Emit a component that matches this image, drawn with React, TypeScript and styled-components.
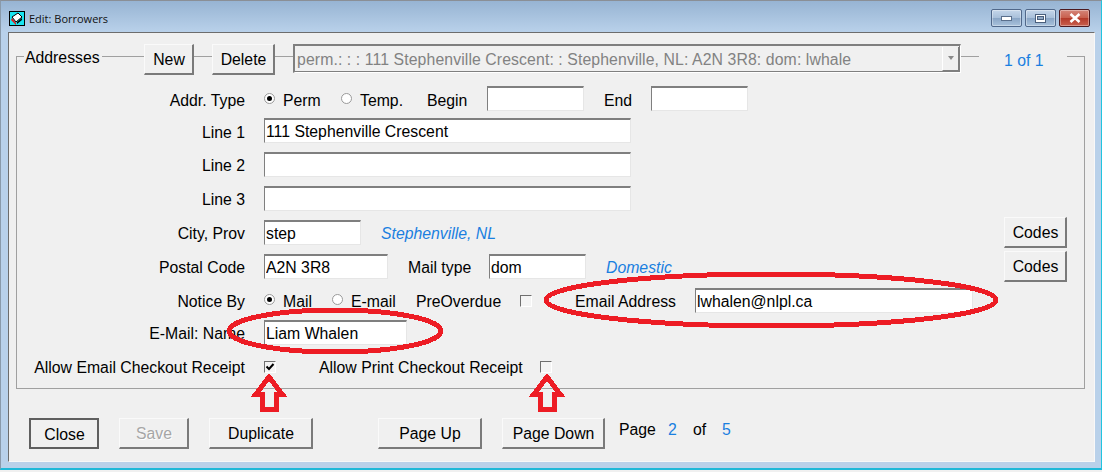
import styled, { createGlobalStyle } from 'styled-components';

const GlobalStyle = createGlobalStyle`
  html, body {
    margin: 0;
    padding: 0;
    background: #f0f0f0;
    overflow: hidden;
  }
`;

const Page = styled.div`
  position: relative;
  width: 1102px;
  height: 472px;
  overflow: hidden;
  font-family: "Liberation Sans", Arial, sans-serif;
  font-size: 15.8px;
  color: #000;
`;

const Frame = styled.div`
  box-sizing: border-box;
  width: 1102px;
  height: 470px;
  display: flex;
  flex-direction: column;
  padding: 1px 6px 6px 7px;
  background: #b9d1ea;
  border-top: 1px solid #8a8f96;
  border-left: 1px solid #8a9aaa;
  border-right: 1px solid #22c4e0;
  border-bottom: 2px solid #1fb8d8;
`;

const TitleBar = styled.div`
  height: 31px;
  margin: -1px -6px 0 -7px;
  padding: 4px 11px 0 8px;
  box-sizing: border-box;
  display: flex;
  align-items: center;
  background: linear-gradient(#97b4d3, #b9d1ea);
  flex-shrink: 0;
`;

const TitleText = styled.span`
  margin-left: 4px;
  font-family: "Open Sans", "Noto Sans", sans-serif;
  font-size: 11px;
  color: #111;
`;

const WindowButtons = styled.div`
  margin-left: auto;
  margin-top: -1px;
  display: flex;
  gap: 3px;
`;

const WindowButton = styled.div<{ $close?: boolean }>`
  box-sizing: border-box;
  width: 31px;
  height: 18px;
  display: flex;
  align-items: center;
  justify-content: center;
  border: 1px solid ${({ $close }) => ($close ? '#4d1a20' : '#50688a')};
  border-radius: 2px;
  background: ${({ $close }) => ($close
    ? 'linear-gradient(#d4867a 0%, #c9604e 48%, #b43a2a 52%, #c9604e 100%)'
    : 'linear-gradient(#c5d6ea 0%, #a9c0da 48%, #8aa6c6 52%, #a9c2dc 100%)')};
  box-shadow: inset 0 0 0 1px rgba(255, 255, 255, 0.35);
`;

const Client = styled.div`
  flex: 1;
  box-sizing: border-box;
  background: #f0f0f0;
  border-top: 1px solid #6d6d6d;
  border-left: 1px solid #6d6d6d;
  border-right: 1px solid #f8f8f8;
  border-bottom: 1px solid #f8f8f8;
  padding: 23px 8px 0 7px;
`;

const Group = styled.div`
  box-sizing: border-box;
  width: 1069px;
  height: 333px;
  display: flex;
  flex-direction: column;
  border: 1px solid #a0a0a0;
  border-top: none;
`;

const GroupHead = styled.div`
  height: 30px;
  margin-top: -12px;
  display: flex;
  align-items: flex-start;
  flex-shrink: 0;
`;

const Rule = styled.div<{ $w?: number }>`
  height: 1px;
  margin-top: 12px;
  background: #a0a0a0;
  width: ${({ $w }) => ($w ? `${$w}px` : 'auto')};
  flex-shrink: 0;
`;

const Legend = styled.span`
  width: 78px;
  padding-left: 1px;
  box-sizing: border-box;
  line-height: 28px;
`;

const Button = styled.button<{ $w: number; $h?: number; $default?: boolean }>`
  box-sizing: border-box;
  width: ${({ $w }) => $w}px;
  height: ${({ $h }) => $h ?? 31}px;
  flex-shrink: 0;
  margin: 0;
  padding: 2px 0 0 1px;
  background: #f0f0f0;
  font: inherit;
  color: #000;
  border-style: solid;
  border-width: ${({ $default }) => ($default ? '2px' : '1px 2px 2px 1px')};
  border-color: ${({ $default }) => ($default
    ? '#5f5f5f'
    : '#fafafa #7a7a7a #7a7a7a #fafafa')};
  &:disabled {
    color: #a6a6a6;
    text-shadow: 1px 1px 0 #fff;
  }
`;

const Combo = styled.div`
  box-sizing: border-box;
  width: 668px;
  height: 29px;
  flex-shrink: 0;
  display: flex;
  align-items: center;
  background: #f0f0f0;
  border-style: solid;
  border-width: 2px 1px 1px 2px;
  border-color: #7f7f7f #fff #fff #7f7f7f;
  box-shadow: inset -1px -1px 0 #7f7f7f;
`;

const ComboText = styled.span`
  flex: 1;
  padding: 2px 0 0 2px;
  overflow: hidden;
  white-space: nowrap;
  letter-spacing: 0.1px;
  color: #828282;
`;

const ComboArrow = styled.div`
  box-sizing: border-box;
  width: 17px;
  height: 24px;
  margin-right: 1px;
  margin-top: -1px;
  display: flex;
  align-items: center;
  justify-content: center;
  border-left: 1px solid #fff;
  border-right: 1px solid #7f7f7f;
  border-bottom: 1px solid #7f7f7f;
  &::after {
    content: '';
    border-left: 3.5px solid transparent;
    border-right: 3.5px solid transparent;
    border-top: 4px solid #8a8a8a;
  }
`;

const Counter = styled.span`
  width: 88px;
  padding-left: 25px;
  box-sizing: border-box;
  color: #1a7fe0;
  line-height: 33px;
`;

const Rows = styled.div`
  margin-top: 10px;
  display: flex;
  flex-direction: column;
`;

// the 2px top padding sits the text a pixel lower, fields and buttons pull back up
const Row = styled.div<{ $h: number }>`
  box-sizing: border-box;
  height: ${({ $h }) => $h}px;
  padding-top: 2px;
  display: flex;
  align-items: center;
  white-space: nowrap;
`;

const Label = styled.span`
  width: 228px;
  margin-right: 19px;
  text-align: right;
  flex-shrink: 0;
`;

const Cell = styled.div<{ $w: number }>`
  width: ${({ $w }) => $w}px;
  flex-shrink: 0;
  display: flex;
  align-items: center;
`;

const Field = styled.input<{ $w: number }>`
  box-sizing: border-box;
  width: ${({ $w }) => $w}px;
  height: 25px;
  flex-shrink: 0;
  margin: -4px 0 0 0;
  padding: 2px 1px 0;
  background: #fff;
  font: inherit;
  color: #000;
  outline: none;
  border-style: solid;
  border-width: 2px 1px 1px 1px;
  border-color: #7f7f7f #e6e6e6 #e6e6e6 #7f7f7f;
`;

const Hint = styled.span`
  color: #1a7fe0;
  font-style: italic;
`;

const Radio = styled.span<{ $on?: boolean }>`
  box-sizing: border-box;
  width: 11px;
  height: 11px;
  margin: -5px 8px 0 0;
  flex-shrink: 0;
  border-radius: 50%;
  background: #fff;
  border: 1px solid #9a9a9a;
  display: flex;
  align-items: center;
  justify-content: center;
  &::after {
    content: '';
    width: 5px;
    height: 5px;
    border-radius: 50%;
    background: ${({ $on }) => ($on ? '#000' : 'transparent')};
  }
`;

const Check = styled.span`
  box-sizing: border-box;
  width: 12px;
  height: 12px;
  margin-top: -3px;
  flex-shrink: 0;
  display: flex;
  background: #f4f4f4;
  border-style: solid;
  border-width: 1px;
  border-color: #6f6f6f #fff #fff #6f6f6f;
`;

const CodesButton = styled(Button)`
  margin: -4px 17px 0 auto;
`;

const Footer = styled.div`
  margin-top: 29px;
  margin-left: 13px;
  display: flex;
  align-items: flex-start;
`;

const Gap = styled.div<{ $w: number }>`
  width: ${({ $w }) => $w}px;
  flex-shrink: 0;
`;

const Pager = styled.div`
  margin-left: 14px;
  display: flex;
  line-height: 23px;
`;

const PagerNum = styled.span<{ $w: number }>`
  width: ${({ $w }) => $w}px;
  color: #1a7fe0;
`;

const PagerWord = styled.span<{ $w: number }>`
  width: ${({ $w }) => $w}px;
`;

const Annotations = styled.svg`
  position: absolute;
  left: 0;
  top: 0;
  pointer-events: none;
`;

function AppIcon() {
  return (
    <svg width="16" height="15" viewBox="0 0 16 15">
      <rect x="0.5" y="0.5" width="15" height="14" fill="#18e4f0" stroke="#000" />
      <path d="M3 6 L9 2 L13 6 L7 11 Z" fill="#fff" stroke="#000" />
      <path d="M3 7 L7 12 L7 14 L2 9 Z" fill="#e01818" />
      <path d="M8 11 L13 7 L13 9 L8 13 Z" fill="#000" />
    </svg>
  );
}

function CheckMark() {
  return (
    <svg width="10" height="10" viewBox="0 0 10 10">
      <path d="M1.5 4.5 L4 7 L8.5 2" fill="none" stroke="#000" strokeWidth="2" />
    </svg>
  );
}

export default function App() {
  const arrow = (x: number) => `M${x} 377 L${x + 13} 394 H${x + 7} V409 H${x - 7} V394 H${x - 13} Z`;

  return (
    <Page>
      <GlobalStyle />
      <Frame>
        <TitleBar>
          <AppIcon />
          <TitleText>Edit: Borrowers</TitleText>
          <WindowButtons>
            <WindowButton>
              <svg width="12" height="6" viewBox="0 0 12 6">
                <rect x="0.5" y="1.5" width="10" height="4" fill="#fff" stroke="#5a6f8c" />
              </svg>
            </WindowButton>
            <WindowButton>
              <svg width="11" height="9" viewBox="0 0 11 9">
                <rect x="0.5" y="0.5" width="10" height="8" fill="#fff" stroke="#4a5f7c" />
                <rect x="2.5" y="2.5" width="6" height="3" fill="#90a8c4" stroke="#4a5f7c" />
              </svg>
            </WindowButton>
            <WindowButton $close>
              <svg width="12" height="10" viewBox="0 0 12 10">
                <path d="M1.5 1 L10.5 9 M10.5 1 L1.5 9" stroke="#fff" strokeWidth="2.6" />
              </svg>
            </WindowButton>
          </WindowButtons>
        </TitleBar>
        <Client>
          <Group>
            <GroupHead>
              <Rule $w={7} />
              <Legend>Addresses</Legend>
              <Rule $w={42} />
              <Button $w={50}>New</Button>
              <Rule $w={18} />
              <Button $w={63}>Delete</Button>
              <Rule $w={18} />
              <Combo>
                <ComboText>perm.: : : 111 Stephenville Crescent: : Stephenville, NL: A2N 3R8: dom: lwhale</ComboText>
                <ComboArrow />
              </Combo>
              <Rule $w={18} />
              <Counter>1 of 1</Counter>
              <Rule $w={17} />
            </GroupHead>
            <Rows>
              <Row $h={31}>
                <Label>Addr. Type</Label>
                <Cell $w={77}><Radio $on />Perm</Cell>
                <Cell $w={86}><Radio />Temp.</Cell>
                <Cell $w={60}>Begin</Cell>
                <Cell $w={117}><Field $w={97} readOnly value="" /></Cell>
                <Cell $w={47}>End</Cell>
                <Field $w={97} readOnly value="" />
              </Row>
              <Row $h={33}>
                <Label>Line 1</Label>
                <Field $w={367} readOnly value="111 Stephenville Crescent" />
              </Row>
              <Row $h={34}>
                <Label>Line 2</Label>
                <Field $w={367} readOnly value="" />
              </Row>
              <Row $h={34}>
                <Label>Line 3</Label>
                <Field $w={367} readOnly value="" />
              </Row>
              <Row $h={34}>
                <Label>City, Prov</Label>
                <Cell $w={117}><Field $w={97} readOnly value="step" /></Cell>
                <Hint>Stephenville, NL</Hint>
                <CodesButton $w={63}>Codes</CodesButton>
              </Row>
              <Row $h={34}>
                <Label>Postal Code</Label>
                <Cell $w={144}><Field $w={124} readOnly value="A2N 3R8" /></Cell>
                <Cell $w={81}>Mail type</Cell>
                <Cell $w={117}><Field $w={97} readOnly value="dom" /></Cell>
                <Hint>Domestic</Hint>
                <CodesButton $w={63}>Codes</CodesButton>
              </Row>
              <Row $h={34}>
                <Label>Notice By</Label>
                <Cell $w={68}><Radio $on />Mail</Cell>
                <Cell $w={84}><Radio />E-mail</Cell>
                <Cell $w={104}>PreOverdue</Cell>
                <Cell $w={55}><Check /></Cell>
                <Cell $w={120}>Email Address</Cell>
                <Field $w={278} readOnly value="lwhalen@nlpl.ca" />
              </Row>
              <Row $h={30}>
                <Label>E-Mail: Name</Label>
                <Field $w={143} readOnly value="Liam Whalen" />
              </Row>
              <Row $h={38}>
                <Label>Allow Email Checkout Receipt</Label>
                <Cell $w={55}><Check><CheckMark /></Check></Cell>
                <Cell $w={221}>Allow Print Checkout Receipt</Cell>
                <Check />
              </Row>
            </Rows>
          </Group>
          <Footer>
            <Button $w={70} $default>Close</Button>
            <Gap $w={20} />
            <Button $w={70} disabled>Save</Button>
            <Gap $w={20} />
            <Button $w={104}>Duplicate</Button>
            <Gap $w={65} />
            <Button $w={104}>Page Up</Button>
            <Gap $w={20} />
            <Button $w={103}>Page Down</Button>
            <Pager>
              <PagerWord $w={49}>Page</PagerWord>
              <PagerNum $w={25}>2</PagerNum>
              <PagerWord $w={29}>of</PagerWord>
              <PagerNum $w={12}>5</PagerNum>
            </Pager>
          </Footer>
        </Client>
      </Frame>
      <Annotations width="1102" height="472" viewBox="0 0 1102 472" fill="none" stroke="#ed1c24" strokeWidth="5" shapeRendering="crispEdges">
        <ellipse cx="771" cy="300" rx="225" ry="26" />
        <ellipse cx="335" cy="331" rx="106" ry="21" />
        <path d={arrow(269)} />
        <path d={arrow(547)} />
      </Annotations>
    </Page>
  );
}
